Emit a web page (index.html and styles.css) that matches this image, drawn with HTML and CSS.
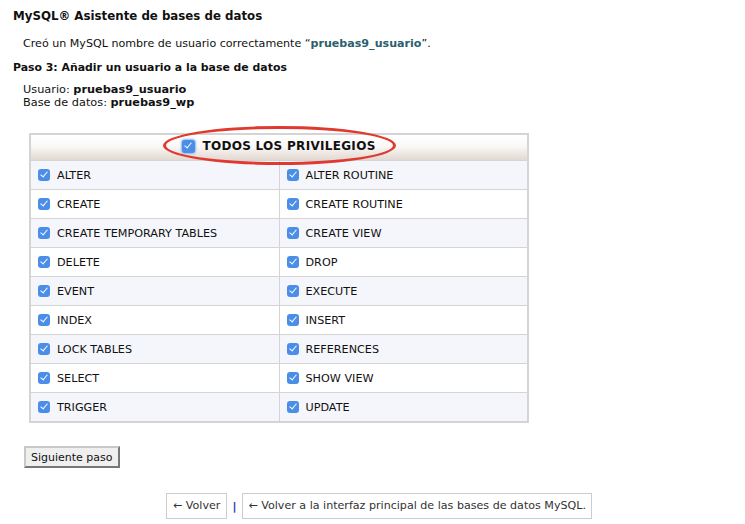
FILE: index.html
```html
<!DOCTYPE html>
<html>
<head>
<meta charset="utf-8">
<link rel="stylesheet" href="styles.css">
</head>
<body>
<div class="page">
  <h1 class="title">MySQL® Asistente de bases de datos</h1>
  <p class="msg">Creó un MySQL nombre de usuario correctamente “<b class="hl">pruebas9_usuario</b>”.</p>
  <h2 class="step">Paso 3: Añadir un usuario a la base de datos</h2>
  <div class="info">
    <div>Usuario: <b>pruebas9_usuario</b></div>
    <div>Base de datos: <b>pruebas9_wp</b></div>
  </div>
  <table class="priv">
    <thead>
      <tr><th colspan="2"><span class="allwrap"><span class="cb big"></span>TODOS LOS PRIVILEGIOS<span class="ring"></span></span></th></tr>
    </thead>
    <tbody>
      <tr><td><span class="cb"></span>ALTER</td><td><span class="cb"></span>ALTER ROUTINE</td></tr>
      <tr><td><span class="cb"></span>CREATE</td><td><span class="cb"></span>CREATE ROUTINE</td></tr>
      <tr><td><span class="cb"></span>CREATE TEMPORARY TABLES</td><td><span class="cb"></span>CREATE VIEW</td></tr>
      <tr><td><span class="cb"></span>DELETE</td><td><span class="cb"></span>DROP</td></tr>
      <tr><td><span class="cb"></span>EVENT</td><td><span class="cb"></span>EXECUTE</td></tr>
      <tr><td><span class="cb"></span>INDEX</td><td><span class="cb"></span>INSERT</td></tr>
      <tr><td><span class="cb"></span>LOCK TABLES</td><td><span class="cb"></span>REFERENCES</td></tr>
      <tr><td><span class="cb"></span>SELECT</td><td><span class="cb"></span>SHOW VIEW</td></tr>
      <tr><td><span class="cb"></span>TRIGGER</td><td><span class="cb"></span>UPDATE</td></tr>
    </tbody>
  </table>
  <div class="btnrow"><button class="next">Siguiente paso</button></div>
  <div class="links">
    <a class="lnk">← Volver</a><span class="sep">|</span><a class="lnk">← Volver a la interfaz principal de las bases de datos MySQL.</a>
  </div>
</div>
</body>
</html>
```
FILE: styles.css
```css
html, body { margin: 0; padding: 0; background: #fff; }
body { font-family: "DejaVu Sans", Verdana, sans-serif; color: #111; font-size: 11.3px; }
.page { padding: 8px 13px; }
.title { font-size: 11.8px; font-weight: bold; margin: 0; line-height: 16px; }
.msg { margin: 12px 0 0 10px; line-height: 16px; font-size: 11.1px; }
.hl { color: #2c5f6e; }
.step { font-size: 10.9px; font-weight: bold; margin: 8px 0 0; line-height: 16px; }
.info { margin: 7px 0 0 10px; font-size: 11.3px; line-height: 13px; }
.info div:first-child { margin-top: 1px; }
.priv { margin: 24px 0 0 16px; width: 500px; border-collapse: collapse; border: 2px solid #d4d4d4; }
.priv th { height: 25px; padding: 0; background: linear-gradient(#ffffff 0%, #faf8f6 45%, #e2d8d1 100%); font-size: 12px; font-weight: bold; letter-spacing: 0.3px; text-align: center; }
.allwrap { position: relative; display: inline-flex; align-items: center; }
.ring { position: absolute; left: -19px; right: -20px; top: -13px; bottom: -12px; border: 3px solid #e03a30; border-radius: 50%; box-sizing: border-box; }
.priv td { width: 50%; height: 28px; padding: 0 0 0 7px; border: 1px solid #d4d4d4; font-size: 11.2px; white-space: nowrap; }
.priv tbody tr:nth-child(odd) td { background: #f5f6fb; }
.cb { display: inline-block; width: 12px; height: 12px; border-radius: 3px; background: #4a8ee8; vertical-align: -2px; margin-right: 7px; position: relative; }
.cb::after { content: ""; position: absolute; left: 4px; top: 1.5px; width: 3px; height: 6px; border: solid #fff; border-width: 0 1.6px 1.6px 0; transform: rotate(40deg); }
.cb.big { width: 13px; height: 13px; margin-right: 7px; box-shadow: 0 0 2px 1px #8ab6f0; }
.btnrow { margin: 23px 0 0 11px; }
.next { font-family: "DejaVu Sans", Verdana, sans-serif; font-size: 11px; color: #111; background: #efefef; border: 2px solid; border-color: #c8c8c8 #777 #777 #c8c8c8; padding: 2px 5px; height: 22px; }
.links { margin: 25px 0 0 153px; display: flex; align-items: center; font-size: 11.1px; }
.lnk { display: inline-block; border: 1px solid #ccc; padding: 5px 6px; line-height: 14px; color: #333; }
.lnk + .sep + .lnk { padding: 5px 5px; }
.sep { color: #1a3d9a; margin: 0 6px 0 5px; font-weight: bold; }
```
